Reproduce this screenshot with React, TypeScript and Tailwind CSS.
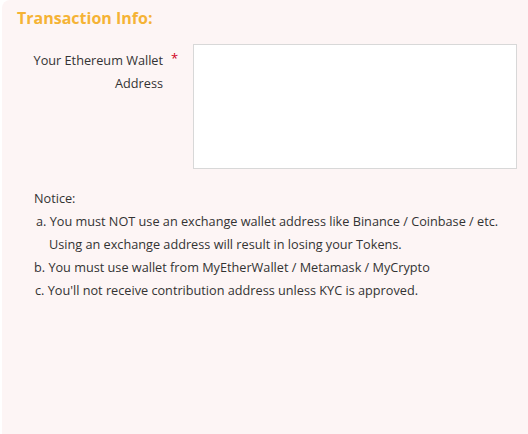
import React from 'react';

const FONT = { fontFamily: '"Open Sans", "Noto Sans", sans-serif' };

const NOTICES = [
  { key: 'a', text: 'a. You must NOT use an exchange wallet address like Binance / Coinbase / etc.', pad: 'pl-[2px]' },
  { key: 'a2', text: 'Using an exchange address will result in losing your Tokens.', pad: 'pl-[15px]' },
  { key: 'b', text: 'b. You must use wallet from MyEtherWallet / Metamask / MyCrypto', pad: 'pl-0' },
  { key: 'c', text: "c. You'll not receive contribution address unless KYC is approved.", pad: 'pl-[1px]' },
];

const App = () => {
  return (
    <div className="min-h-[434px] bg-white pl-[2px]" style={FONT}>
      <div className="min-h-[434px] rounded-tl-[8px] bg-[#fdf5f5] pt-[6px] text-[12.7px] leading-[23px] text-[#333333]">
        <h2 className="pl-[15px] text-[16px] font-bold leading-[24px] text-[#f5b335]">
          Transaction Info:
        </h2>

        <div className="mt-[14px] flex items-start">
          <label className="mt-[5px] w-[161px] text-right">
            Your Ethereum Wallet
            <br />
            Address
          </label>
          <span className="ml-[8px] mt-[7px] text-[13px] leading-[14px] text-[#d0021b]">*</span>
          <textarea className="ml-[15px] h-[125px] w-[324px] resize-none border border-[#d8d8d8] bg-white outline-none" />
        </div>

        <div className="mt-[18px] pl-[32px]">
          <p>Notice:</p>
          {NOTICES.map((item) => (
            <p key={item.key} className={item.pad}>
              {item.text}
            </p>
          ))}
        </div>
      </div>
    </div>
  );
};

export default App;
